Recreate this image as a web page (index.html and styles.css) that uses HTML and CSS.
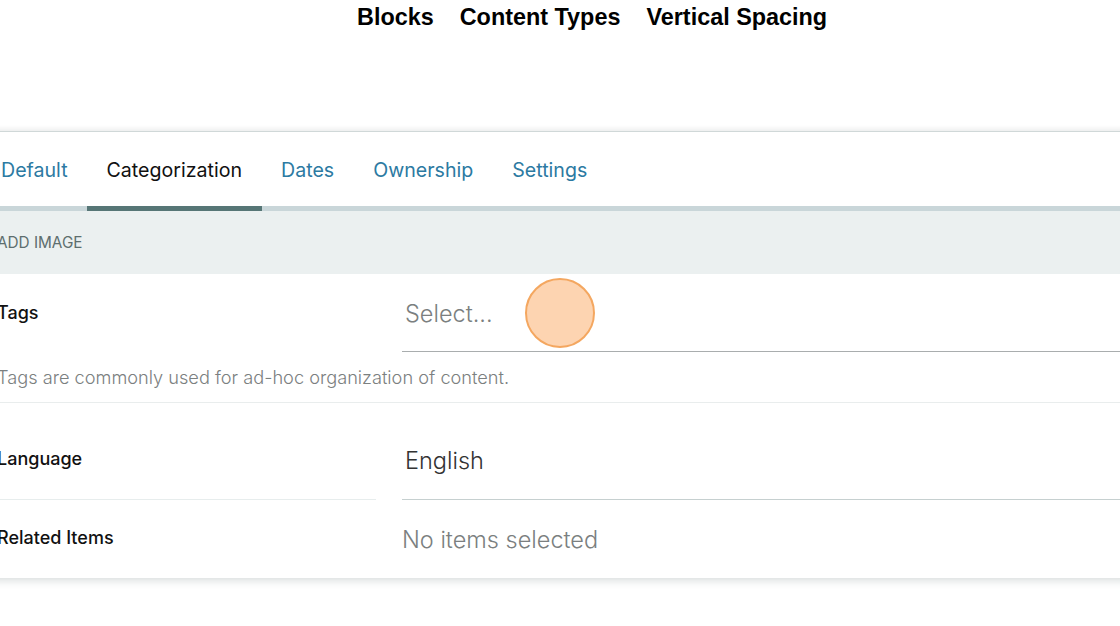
FILE: index.html
```html
<!DOCTYPE html>
<html>
<head>
<meta charset="utf-8">
<link rel="stylesheet" href="styles.css">
</head>
<body>
<nav class="topnav">
  <a>Blocks</a>
  <a>Content Types</a>
  <a>Vertical Spacing</a>
</nav>
<section class="card">
  <div class="tabs">
    <a class="tab">Default</a>
    <a class="tab active">Categorization</a>
    <a class="tab">Dates</a>
    <a class="tab">Ownership</a>
    <a class="tab">Settings</a>
  </div>
  <div class="band">ADD IMAGE</div>
  <div class="field field-tags">
    <div class="row">
      <div class="label">Tags</div>
      <div class="control placeholder">Select...</div>
    </div>
    <div class="help">Tags are commonly used for ad-hoc organization of content.</div>
  </div>
  <div class="row row-lang">
    <div class="label">Language</div>
    <div class="control value">English</div>
  </div>
  <div class="row row-related">
    <div class="label">Related Items</div>
    <div class="control placeholder">No items selected</div>
  </div>
</section>
<div class="cursor"></div>
</body>
</html>
```
FILE: styles.css
```css
html, body {
  margin: 0;
  padding: 0;
  background: #fff;
  overflow: hidden;
  width: 1120px;
  height: 626px;
  font-family: Inter, "Noto Sans", sans-serif;
}

.topnav {
  display: flex;
  gap: 26px;
  padding: 2px 0 0 357px;
  height: 129px;
  box-sizing: border-box;
}
.topnav a {
  font-family: "Liberation Sans", Arial, sans-serif;
  font-weight: 700;
  font-size: 23.4px;
  color: #000;
  line-height: 30px;
}

.card {
  margin-left: -19px;
  width: 1200px;
  background: #fff;
  border-top: 1px solid #d0d8d8;
  box-shadow: 0 3px 8px rgba(40, 60, 60, 0.16), 0 -2px 6px rgba(0, 0, 0, 0.05);
  margin-top: 2px;
}

.tabs {
  display: flex;
  height: 74px;
  border-bottom: 5px solid #c9d6d9;
}
.tab {
  display: flex;
  align-items: center;
  padding: 2px 19.5px 0;
  font-size: 19.6px;
  color: #2c7aa2;
  margin-bottom: -5px;
  border-bottom: 5px solid transparent;
}
.tab:first-child { padding-left: 20px; }
.tab.active {
  color: #111;
  border-bottom-color: #567676;
}

.band {
  height: 63px;
  background: #ebf0f0;
  display: flex;
  align-items: center;
  padding-left: 16px;
  font-size: 15.3px;
  color: #5d6e6e;
}

.row {
  display: flex;
}
.label {
  width: 395px;
  box-sizing: border-box;
  padding-left: 16px;
  display: flex;
  align-items: center;
  font-size: 18px;
  font-weight: 500;
  color: #111;
}
.control {
  flex: 1;
  margin-left: 26px;
  display: flex;
  align-items: center;
  padding-left: 3px;
  font-size: 23.5px;
  font-weight: 300;
}
.placeholder { color: #7b7f80; }
.value { color: #333; }

.field-tags .row { height: 78px; }
.field-tags .control { border-bottom: 1px solid #a9adae; padding-top: 2px; }
.field-tags .label { padding-bottom: 1px; }
.help {
  height: 50px;
  display: flex;
  align-items: center;
  padding-left: 16px;
  font-size: 18.2px;
  font-weight: 300;
  color: #7b8080;
  border-bottom: 1px solid #e9eded;
}

.row-lang { height: 97px; }
.row-lang .label { border-bottom: 1px solid #e7eded; padding-top: 15px; }
.row-lang .control { border-bottom: 1px solid #c6d0d0; padding-top: 18px; }

.row-related { height: 78px; }
.row-related .label { padding-bottom: 4px; }
.row-related .control { padding-left: 0; }

.cursor {
  position: absolute;
  left: 525px;
  top: 278px;
  width: 70px;
  height: 70px;
  box-sizing: border-box;
  border-radius: 50%;
  background: #fdd4b1;
  border: 2.5px solid #f4a760;
}
```
